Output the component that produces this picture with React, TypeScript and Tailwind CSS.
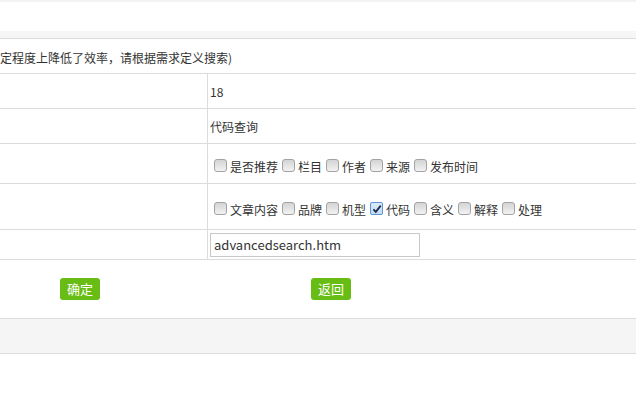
import React from "react"

const font = { fontFamily: '"Noto Sans CJK SC", "Liberation Sans", sans-serif' }

const Box: React.FC<{ checked?: boolean }> = ({ checked }) =>
    checked ? (
        <span className="ml-[4px] mr-[3px] inline-flex size-[13px] shrink-0 items-center justify-center rounded-[2px] border border-[#5c94d6] bg-gradient-to-b from-[#dbeafb] to-[#c4dcf6]">
            <svg viewBox="0 0 11 11" className="size-[10px]">
                <path d="M1.5 5.8 L4.2 8.6 L9.6 1.8" fill="none" stroke="#1c2b4a" strokeWidth="2" />
            </svg>
        </span>
    ) : (
        <span className="ml-[4px] mr-[3px] inline-block size-[13px] shrink-0 rounded-[3px] border border-[#a3a3a3] bg-gradient-to-b from-[#d4d4d4] to-[#f2f2f2]" />
    )

const Options: React.FC<{ items: { label: string; checked?: boolean }[] }> = ({ items }) => (
    <div className="flex items-center">
        {items.map((it) => (
            <span key={it.label} className="flex items-center">
                <Box checked={it.checked} />
                <span className="text-[12px] leading-[16px] pt-[2px]">{it.label}</span>
            </span>
        ))}
    </div>
)

const Row: React.FC<{ h: string; children: React.ReactNode }> = ({ h, children }) => (
    <div className={`grid grid-cols-[208px_1fr] border-b border-[#dcdcdc] ${h}`}>
        <div className="border-r border-[#dcdcdc]" />
        <div className="flex items-center pl-[2px]">{children}</div>
    </div>
)

export default function App() {
    return (
        <div className="w-[636px] h-[397px] overflow-hidden bg-white text-[#333]" style={font}>
            <div className="h-[2px] bg-[#f3f3f3]" />
            <div className="h-[29px]" />
            <div className="h-[8px] border-b border-[#dcdcdc] bg-[#f6f6f6]" />

            <div className="flex h-[35px] items-center border-b border-[#dcdcdc] pt-[3px] text-[12px]">
                定程度上降低了效率，请根据需求定义搜索)
            </div>

            <Row h="h-[35px]">
                <span className="pt-[1px] text-[12px]">18</span>
            </Row>
            <Row h="h-[35px]">
                <span className="pt-[1px] text-[12px]">代码查询</span>
            </Row>
            <Row h="h-[40px]">
                <div className="pt-[4px]">
                    <Options items={[{ label: "是否推荐" }, { label: "栏目" }, { label: "作者" }, { label: "来源" }, { label: "发布时间" }]} />
                </div>
            </Row>
            <Row h="h-[46px]">
                <div className="pt-[4px]">
                    <Options
                        items={[
                            { label: "文章内容" },
                            { label: "品牌" },
                            { label: "机型" },
                            { label: "代码", checked: true },
                            { label: "含义" },
                            { label: "解释" },
                            { label: "处理" },
                        ]}
                    />
                </div>
            </Row>
            <Row h="h-[30px]">
                <input
                    type="text"
                    defaultValue="advancedsearch.htm"
                    className="h-[24px] w-[210px] border border-[#c8c8c8] px-[3px] text-[13px] text-[#333] outline-none"
                    style={font}
                />
            </Row>

            <div className="flex h-[59px] items-center border-b border-[#dcdcdc] pl-[60px]">
                <button className="h-[22px] w-[40px] rounded-[3px] bg-[#68bd14] text-[13px] leading-[22px] text-white">确定</button>
                <button className="ml-[211px] h-[22px] w-[40px] rounded-[3px] bg-[#68bd14] text-[13px] leading-[22px] text-white">返回</button>
            </div>
            <div className="h-[35px] border-b border-[#dcdcdc] bg-[#f5f5f5]" />
        </div>
    )
}
